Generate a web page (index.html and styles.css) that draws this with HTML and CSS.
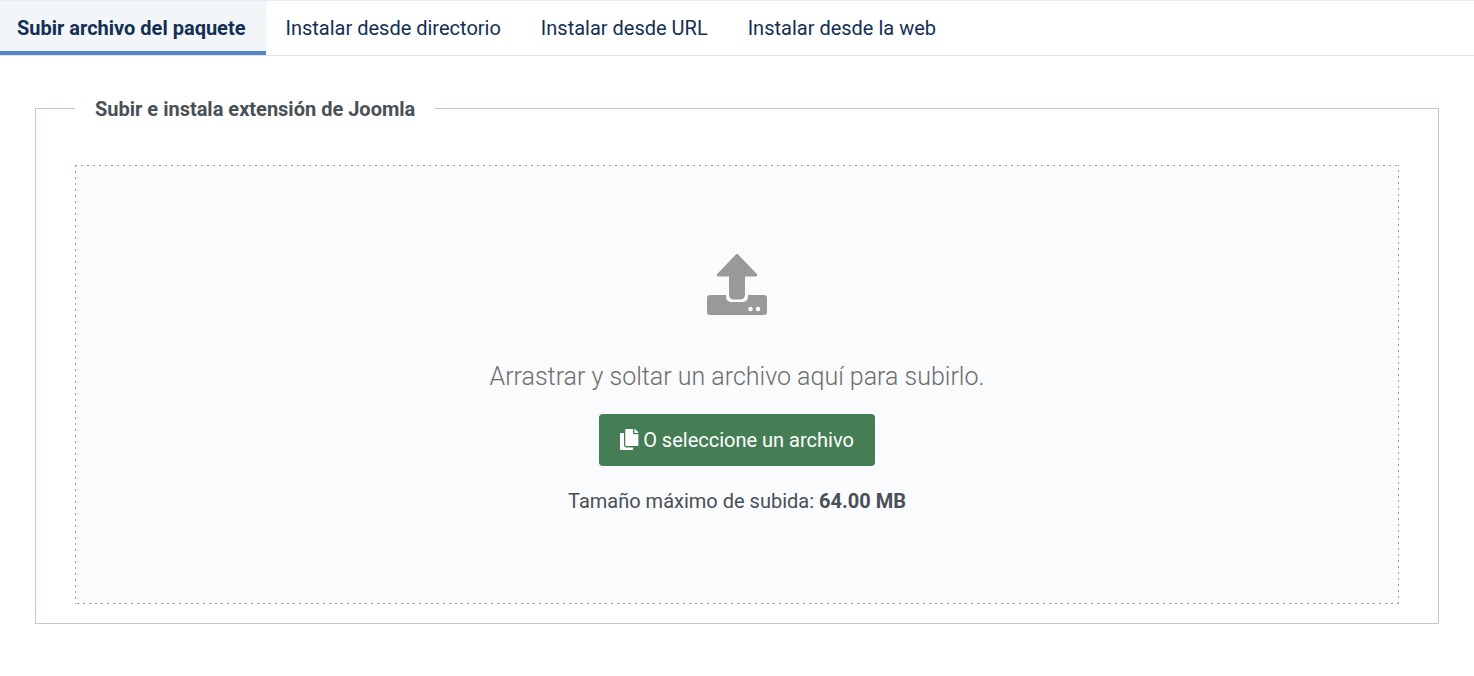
FILE: index.html
```html
<!DOCTYPE html>
<html lang="es">
<head>
<meta charset="utf-8">
<title>Instalar extensiones</title>
<link rel="stylesheet" href="styles.css">
</head>
<body>
<nav class="tabs">
  <a class="tab active" href="#">Subir archivo del paquete</a>
  <a class="tab" href="#">Instalar desde directorio</a>
  <a class="tab" href="#">Instalar desde URL</a>
  <a class="tab" href="#">Instalar desde la web</a>
</nav>
<main class="content">
  <fieldset class="panel">
    <legend class="panel-title">Subir e instala extensión de Joomla</legend>
    <div class="dropzone">
      <svg class="upload-icon" viewBox="0 0 60 61" aria-hidden="true">
        <path fill="#999" d="M28.900 .5 a1.500 1.500 0 0 1 2.200 0 L49.600 19.800 a1.500 1.500 0 0 1 -1.100 2.700 H38 V41 a4.500 4.500 0 0 1 -4.500 4.500 H26.500 a4.500 4.500 0 0 1 -4.500 -4.500 V22.500 H11.500 a1.500 1.500 0 0 1 -1.100 -2.700 Z"/>
        <path fill="#999" fill-rule="evenodd" d="M3 41 H19 V43 a5 5 0 0 0 5 5 H36 a5 5 0 0 0 5 -5 V41 H57 a3 3 0 0 1 3 3 V58 a3 3 0 0 1 -3 3 H3 a3 3 0 0 1 -3 -3 V44 a3 3 0 0 1 3 -3 Z M41.200 55 a2.300 2.300 0 1 0 4.600 0 a2.300 2.300 0 1 0 -4.600 0 Z M48.700 55 a2.300 2.300 0 1 0 4.600 0 a2.300 2.300 0 1 0 -4.600 0 Z"/>
      </svg>
      <p class="drop-text">Arrastrar y soltar un archivo aquí para subirlo.</p>
      <button class="select-btn" type="button">
        <svg class="copy-icon" viewBox="0 0 448 512" aria-hidden="true">
          <path fill="#fff" d="M320 448v40c0 13.255-10.745 24-24 24H24c-13.255 0-24-10.745-24-24V120c0-13.255 10.745-24 24-24h72v296c0 30.879 25.121 56 56 56h168zm0-344V0H152c-13.255 0-24 10.745-24 24v368c0 13.255 10.745 24 24 24h272c13.255 0 24-10.745 24-24V128H344c-13.200 0-24-10.800-24-24zm120.971-31.029L375.029 7.029A24 24 0 0 0 358.059 0H352v96h96v-6.059a24 24 0 0 0-7.029-16.970z"/>
        </svg>
        <span>O seleccione un archivo</span>
      </button>
      <p class="max-size">Tamaño máximo de subida: <strong>64.00 MB</strong></p>
    </div>
  </fieldset>
</main>
</body>
</html>
```
FILE: styles.css
```css
* { box-sizing: border-box; }
html, body { margin: 0; padding: 0; }
body {
  background: #fff;
  font-family: Roboto, "Liberation Sans", sans-serif;
  font-size: 20px;
  line-height: 1.5;
  color: #495057;
}
.tabs {
  display: flex;
  height: 56px;
  border-top: 1px solid #e9edf3;
  border-bottom: 1px solid #dfe4ec;
}
.tab {
  display: block;
  height: 55px;
  padding: 12px 20px 0;
  color: #132f53;
  text-decoration: none;
  font-size: 20px;
  line-height: 30px;
}
.tab.active {
  height: 54px;
  padding: 12px 20.4px 0 17px;
  font-weight: 700;
  color: #132f53;
  background: #f3f6f9;
  border-bottom: 4px solid #5384c4;
}
.tab.active + .tab { padding-left: 19.6px; }
.content { padding: 37px 35px 0; }
.panel {
  margin: 0;
  min-width: 0;
  padding: 41px 39px 19px;
  border: 1px solid #b9c9e0;
}
.panel-title {
  margin-left: 0;
  padding: 1px 20px 0;
  font-size: 20px;
  font-weight: 700;
  line-height: 30px;
  color: #495057;
}
.dropzone {
  display: flex;
  flex-direction: column;
  align-items: center;
  height: 439px;
  padding-top: 89px;
  background:
    repeating-linear-gradient(90deg, #999 0 2px, transparent 2px 6px) top left / 100% 1px no-repeat,
    repeating-linear-gradient(270deg, #999 0 2px, transparent 2px 6px) bottom left / 100% 1px no-repeat,
    repeating-linear-gradient(180deg, #999 0 2px, transparent 2px 6px) top left / 1px 100% no-repeat,
    repeating-linear-gradient(0deg, #999 0 2px, transparent 2px 6px) top right / 1px 100% no-repeat,
    #fafbfd;
}
.upload-icon { display: block; width: 60px; height: 61px; }
.drop-text {
  margin: 43px 0 0;
  font-size: 25px;
  font-weight: 300;
  line-height: 37px;
  color: #6d6d6d;
}
.select-btn {
  display: flex;
  align-items: center;
  justify-content: center;
  gap: 4.6px;
  width: 276px;
  height: 52px;
  margin-top: 19px;
  padding: 0;
  border: 0;
  border-radius: 4px;
  background: #457d54;
  color: #fff;
  font: 400 20px/30px Roboto, "Liberation Sans", sans-serif;
}
.copy-icon { display: block; width: 18.4px; height: 21px; margin-bottom: 1px; }
.max-size { margin: 20px 0 0; line-height: 30px; }
.max-size strong { font-weight: 700; }
```
